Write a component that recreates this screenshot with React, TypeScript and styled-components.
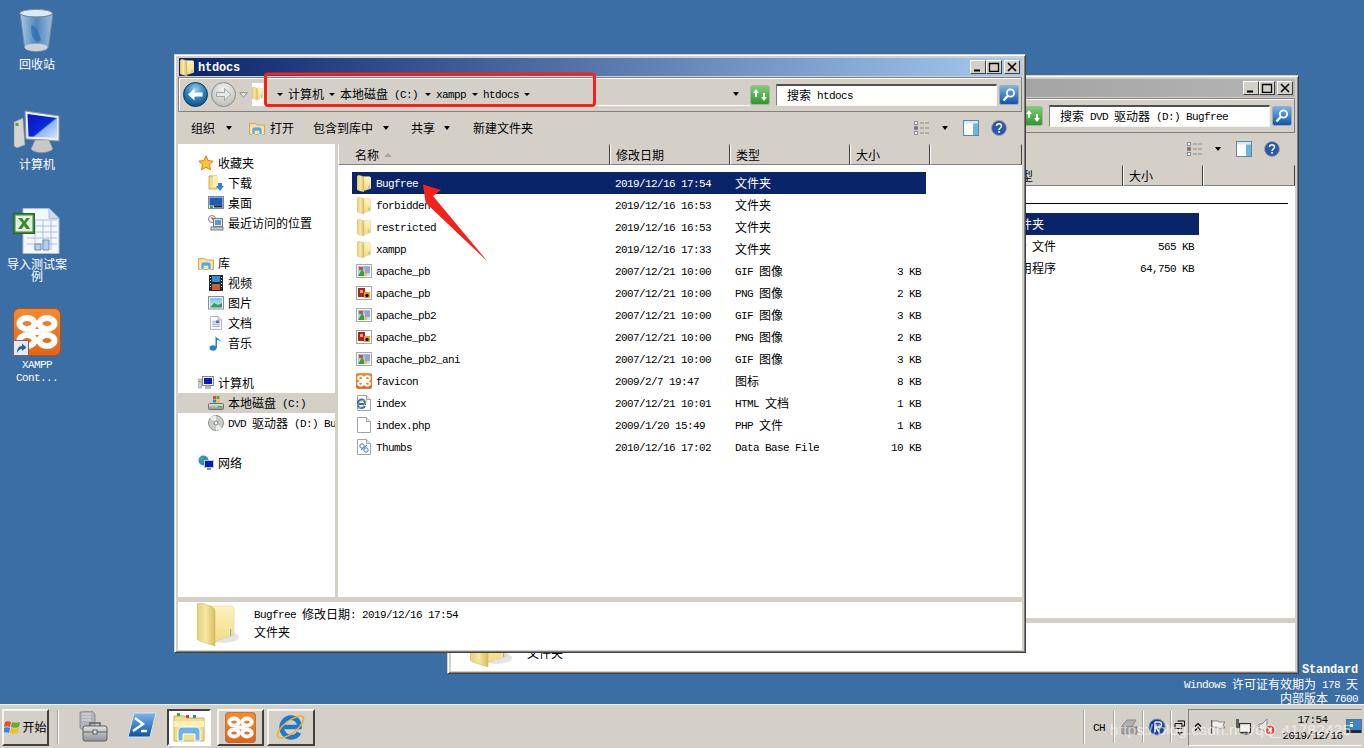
import React from "react";
import styled, { createGlobalStyle } from "styled-components";

const Global = createGlobalStyle`
  html, body { margin: 0; padding: 0; background: #3a6ea5; overflow: hidden; }
  #root { width: 1364px; height: 748px; }
  * { box-sizing: border-box; }
`;

const CJK = /[\u2e80-\u9fff\uff00-\uffef]/;
const CJK_SPLIT = /([\u2e80-\u9fff\uff00-\uffef]+)/;
const Han = styled.span`font: 12px/1 "Noto Sans CJK SC", sans-serif; white-space: pre;`;
const Lat = styled.span`font: 11px/1 "Liberation Mono", monospace; letter-spacing: -.6px; white-space: pre; vertical-align: 1px;`;
const Txt = ({ children }: { children: string }) => (
  <>
    {children.split(CJK_SPLIT).filter(Boolean).map((p, i) =>
      CJK.test(p) ? <Han key={i}>{p}</Han> : <Lat key={i}>{p}</Lat>
    )}
  </>
);

const S = styled.svg`display: block; flex: none;`;
const HiddenDefs = styled.svg`position: absolute; width: 0; height: 0;`;

const Defs = () => (
  <HiddenDefs>
    <defs>
      <linearGradient id="fld" x1="0" y1="0" x2="1" y2="0"><stop offset="0" stopColor="#e6cf7a" /><stop offset=".5" stopColor="#f6e7a2" /><stop offset="1" stopColor="#d9bd60" /></linearGradient>
      <linearGradient id="fldb" x1="0" y1="0" x2="0" y2="1"><stop offset="0" stopColor="#fdf3bd" /><stop offset="1" stopColor="#f2dc86" /></linearGradient>
      <radialGradient id="ball" cx=".5" cy=".3" r=".8"><stop offset="0" stopColor="#9ed0ee" /><stop offset=".5" stopColor="#2a7fb8" /><stop offset="1" stopColor="#0a3f6e" /></radialGradient>
      <radialGradient id="ballg" cx=".5" cy=".3" r=".8"><stop offset="0" stopColor="#f2f2f0" /><stop offset="1" stopColor="#b6b6b2" /></radialGradient>
      <linearGradient id="xam" x1="0" y1="0" x2="0" y2="1"><stop offset="0" stopColor="#f58a30" /><stop offset="1" stopColor="#e2641a" /></linearGradient>
      <linearGradient id="blu" x1="0" y1="0" x2="0" y2="1"><stop offset="0" stopColor="#7fb4e8" /><stop offset="1" stopColor="#0a52a8" /></linearGradient>
      <linearGradient id="grn" x1="0" y1="0" x2="0" y2="1"><stop offset="0" stopColor="#7fd07a" /><stop offset="1" stopColor="#2c962e" /></linearGradient>
      <linearGradient id="scr" x1="0" y1="0" x2="1" y2="1"><stop offset="0" stopColor="#0a14c0" /><stop offset=".55" stopColor="#0a2ad8" /><stop offset=".6" stopColor="#8fb4f0" /><stop offset="1" stopColor="#d5e4f8" /></linearGradient>
      <linearGradient id="sil" x1="0" y1="0" x2="0" y2="1"><stop offset="0" stopColor="#e4e4e4" /><stop offset="1" stopColor="#8e9296" /></linearGradient>
      <linearGradient id="bin" x1="0" y1="0" x2="1" y2="0"><stop offset="0" stopColor="#a8c8e4" /><stop offset=".5" stopColor="#4f86bc" /><stop offset="1" stopColor="#9cbedc" /></linearGradient>
      <linearGradient id="sky" x1="0" y1="0" x2="0" y2="1"><stop offset="0" stopColor="#7fc4e8" /><stop offset="1" stopColor="#c8e8f4" /></linearGradient>
    </defs>
  </HiddenDefs>
);

const Folder = ({ w = 14, h = 17 }: { w?: number; h?: number }) => (
  <S width={w} height={h} viewBox="0 0 14 17">
    <path d="M6 1.5h6.5l1.5 1v11l-8 2.5z" fill="url(#fldb)" stroke="#d8c070" strokeWidth=".3" />
    <path d="M0 1.5 1.5 0l4 1.2C6.5 1.6 7 2.5 7 4v13l-5.5-1.5L0 14.8z" fill="url(#fld)" stroke="#c4a850" strokeWidth=".3" />
    <rect x="11.6" y="10.5" width=".9" height="3" fill="#6fb0e4" />
  </S>
);
const BigFolder = () => (
  <S width={44} height={44} viewBox="0 0 44 44">
    <ellipse cx="26" cy="34" rx="16" ry="6" fill="#000" opacity=".1" />
    <path d="M13 3h22l2 2v27l-24 8z" fill="url(#fldb)" stroke="#dcc87c" strokeWidth=".5" />
    <path d="M0 1 4 0l9 3c3 1 5 3 5 6v34L3 38 0 36z" fill="url(#fld)" stroke="#c8ae58" strokeWidth=".5" />
    <rect x="33" y="26" width="1.2" height="7" fill="#7ab8ec" />
  </S>
);
const GifThumb = () => (
  <S width={16} height={14} viewBox="0 0 16 14">
    <rect x=".5" y=".5" width="15" height="13" fill="#fff" stroke="#a8a8a8" />
    <rect x="2" y="2" width="12" height="10" fill="url(#sky)" />
    <rect x="9" y="3" width="5" height="6" fill="#a49ad8" />
    <path d="M2 12 6 5l4 7z" fill="#3c9c3c" />
    <rect x="3" y="3" width="4" height="3" fill="#e04a30" />
    <rect x="8" y="9" width="3" height="3" fill="#e8c840" />
  </S>
);
const PngThumb = () => (
  <S width={16} height={14} viewBox="0 0 16 14">
    <rect x=".5" y=".5" width="15" height="13" fill="#fff" stroke="#a8a8a8" />
    <rect x="2" y="2" width="7" height="9" fill="#a82818" />
    <rect x="4" y="4" width="3" height="3" fill="#e8a090" />
    <rect x="8" y="6" width="6" height="6" fill="#e8a020" />
    <circle cx="11" cy="9.5" r="1.7" fill="#101010" />
  </S>
);
const XamppLogo = ({ size }: { size: number }) => (
  <S width={size} height={size} viewBox="0 0 48 48">
    <rect x=".5" y=".5" width="47" height="47" rx="6" fill="url(#xam)" stroke="#b8500f" />
    <g fill="none" stroke="#fff" strokeWidth="6">
      <ellipse cx="14" cy="15.500" rx="7.500" ry="5.500" />
      <ellipse cx="14" cy="32.500" rx="7.500" ry="5.500" />
      <ellipse cx="34" cy="15.500" rx="7.500" ry="5.500" />
      <ellipse cx="34" cy="32.500" rx="7.500" ry="5.500" />
      <path d="M16 24h16" />
    </g>
  </S>
);
const Page = ({ children, w = 14, h = 16 }: { children?: React.ReactNode; w?: number; h?: number }) => (
  <S width={w} height={h} viewBox="0 0 14 16">
    <path d="M.5.5h9l4 4v11H.5z" fill="#fff" stroke="#a0a4a8" />
    <path d="M9.5.5v4h4" fill="#e8ecf0" stroke="#a0a4a8" />
    {children}
  </S>
);
const IeMark = ({ size }: { size: number }) => (
  <S width={size} height={size} viewBox="0 0 32 32">
    <path d="M8 16h17c.2-6-4-10-9-10S6 10.500 6 16.500 11 27 16 27c4 0 7-2 8.500-5" fill="none" stroke="#1c78d0" strokeWidth="5" />
    <ellipse cx="15.500" cy="16" rx="17" ry="6.500" transform="rotate(-38 15.500 16)" fill="none" stroke="#eeb020" strokeWidth="1.600" />
  </S>
);
const IndexIcon = () => (
  <Page><g transform="translate(-1 2)"><path d="M2 7h7c0-3-1.500-4.500-3.500-4.500S1.500 4.500 1.500 7 3.500 11 5.500 11c1.500 0 2.800-.6 3.300-2" fill="none" stroke="#2070d0" strokeWidth="2" /><ellipse cx="5.500" cy="7" rx="6" ry="2.400" transform="rotate(-38 5.500 7)" fill="none" stroke="#f0b020" strokeWidth=".8" /></g></Page>
);
const ThumbIcon = () => (
  <Page><g fill="none" stroke="#4a78b0" strokeWidth="1"><circle cx="5" cy="7" r="2.200" /><circle cx="9" cy="11" r="2.200" /><path d="M4 11l6-5" /></g></Page>
);

const Star = () => <S width={16} height={16} viewBox="0 0 16 16"><path d="M8 .8l2.200 4.800 5 .6-3.700 3.400 1 5.200L8 12.300 3.500 14.800l1-5.200L.8 6.200l5-.6z" fill="#f8c830" stroke="#e87818" /></S>;
const DownIcon = () => <S width={16} height={16} viewBox="0 0 16 16"><path d="M1 1h8v13H1z" fill="#f2dc86" stroke="#c8ae58" /><path d="M5 1h5v11H5z" fill="#fbeeb0" /><path d="M10 8h4v3h2l-4 5-4-5h2z" fill="#2c86d8" /></S>;
const DeskIcon = () => <S width={16} height={14} viewBox="0 0 16 14"><rect x=".5" y=".5" width="15" height="12" fill="#e8e8e8" stroke="#7a8ca0" /><rect x="1.500" y="1.500" width="13" height="8" fill="#1c5cb8" /><rect x="6" y="9.500" width="8.500" height="2" fill="#222" /><rect x="2" y="10" width="3" height="2" fill="#38a038" /></S>;
const RecentIcon = () => <S width={16} height={16} viewBox="0 0 16 16"><circle cx="4" cy="4" r="3.500" fill="#f0f0f0" stroke="#808080" /><path d="M4 2v2h2" stroke="#606060" fill="none" /><rect x="5.500" y="3.500" width="9" height="8" fill="#e8e8e8" stroke="#707880" /><rect x="7" y="5" width="6" height="5" fill="#5a98c8" /><rect x="3" y="12" width="12" height="3" fill="#c8c8c8" stroke="#808080" /></S>;
const LibIcon = ({ w = 16, h = 14 }: { w?: number; h?: number }) => <S width={w} height={h} viewBox="0 0 16 14"><path d="M.5 2.500h6l1 1.500h8v9.500H.5z" fill="#f6e296" stroke="#c8ae58" /><path d="M3 13.500V8a3 3 0 0 1 3-2h4a3 3 0 0 1 3 2v5.500h-3V10H6v3.500z" fill="#5ea8dc" stroke="#fff" strokeWidth=".5" /></S>;
const VideoIcon = () => <S width={14} height={16} viewBox="0 0 14 16"><rect width="14" height="16" fill="#1c2a38" /><rect x="3" y="1" width="8" height="6" fill="#3a8ed8" /><rect x="3" y="9" width="8" height="6" fill="#c86038" /><path d="M1 2h1v1H1zM1 5h1v1H1zM1 8h1v1H1zM1 11h1v1H1zM12 2h1v1h-1zM12 5h1v1h-1zM12 8h1v1h-1zM12 11h1v1h-1z" fill="#fff" /></S>;
const PicIcon = () => <S width={16} height={14} viewBox="0 0 16 14"><rect x=".5" y=".5" width="15" height="12.500" fill="#f4f4f4" stroke="#8090a0" /><rect x="2" y="2" width="12" height="9.500" fill="url(#sky)" /><path d="M2 11.500 6 7l4 2 4-2v4.500z" fill="#3c9468" /></S>;
const DocIcon = () => <Page w={12} h={16}><path d="M2.500 6h6M2.500 8h9M2.500 10h9M2.500 12h9" stroke="#8ca0c0" /><rect x="7" y="5" width="4" height="3" fill="#4a78c0" /></Page>;
const MusicIcon = () => <S width={14} height={16} viewBox="0 0 14 16"><ellipse cx="4" cy="13" rx="3.500" ry="2.800" fill="#2a80d0" /><path d="M6.500 13V1c1 2.500 5 3 6 6-1.500-1.500-3.500-2-4.500-2v8z" fill="#2a80d0" /></S>;
const CompSmall = () => <S width={16} height={14} viewBox="0 0 16 14"><rect x="0" y="3" width="3.500" height="9" fill="#d0d0c8" stroke="#808080" strokeWidth=".5" /><rect x="1" y="5" width="1.500" height="1" fill="#30a030" /><rect x="4.500" y=".5" width="11" height="9" fill="#f0f0f0" stroke="#808890" /><rect x="6" y="2" width="8" height="6" fill="#0a1cb8" /><rect x="7" y="10" width="6" height="3" fill="#b8b8b8" /></S>;
const DiskIcon = () => <S width={16} height={16} viewBox="0 0 16 16"><rect x=".5" y="8.500" width="15" height="6" rx="1" fill="url(#sil)" stroke="#707070" /><rect x="10" y="11" width="4" height="1.500" fill="#40c040" /><rect x="5" y="1" width="3" height="3" fill="#e84a20" /><rect x="8.500" y="1" width="3" height="3" fill="#50b030" /><rect x="5" y="4.500" width="3" height="3" fill="#2880e0" /><rect x="8.500" y="4.500" width="3" height="3" fill="#f0c020" /></S>;
const DvdIcon = () => <S width={16} height={16} viewBox="0 0 16 16"><circle cx="8" cy="8" r="7.500" fill="#c8ccc8" stroke="#909090" /><path d="M8 8 2 3a8 8 0 0 1 6-2.500zM8 8l6 5a8 8 0 0 1-6 2.500z" fill="#eef2e8" /><circle cx="8" cy="8" r="2" fill="#fff" stroke="#808080" /></S>;
const NetIcon = () => <S width={16} height={16} viewBox="0 0 16 16"><circle cx="5.500" cy="5.500" r="5" fill="#2a90d8" /><path d="M2 3c2-2 4 0 3 2S2 6 2 3zM6 8c1-1 3 0 2 2z" fill="#50b040" /><rect x="6.500" y="5.500" width="9" height="7" fill="#0a1cb8" stroke="#c0c8d0" /><rect x="9" y="13" width="4" height="2" fill="#8090a0" /></S>;

const Ball = ({ on, flip }: { on: boolean; flip?: boolean }) => (
  <S width={25} height={25} viewBox="0 0 25 25">
    <circle cx="12.500" cy="12.500" r="12" fill={on ? "url(#ball)" : "url(#ballg)"} stroke={on ? "#0a3a60" : "#8c8c8c"} />
    <g transform={flip ? "rotate(180 12.500 12.500)" : undefined}>
      <path d="M5 12.500 11.500 6.500v4h8v4h-8v4z" fill={on ? "#fff" : "#e6e6e2"} stroke={on ? "none" : "#a4a4a0"} />
    </g>
  </S>
);
const Chevron = () => <S width={9} height={6} viewBox="0 0 9 6"><path d="M.7.7h7.600L4.500 5.300z" fill="#eee" stroke="#8a8a8a" /></S>;
const Refresh = () => (
  <S width={20} height={20} viewBox="0 0 20 20">
    <rect x=".5" y=".5" width="19" height="19" rx="2" fill="url(#grn)" stroke="#b0b0a8" />
    <path d="M3 8l3-4 3 4H7v4H5V8zM17 12l-3 4-3-4h2V8h2v4z" fill="#fff" />
  </S>
);
const SearchGlyph = () => (
  <S width={20} height={20} viewBox="0 0 20 20">
    <rect x=".5" y=".5" width="19" height="19" rx="2" fill="url(#blu)" stroke="#a0a8b0" />
    <circle cx="11.500" cy="8" r="3.600" fill="none" stroke="#fff" strokeWidth="1.800" />
    <path d="M8.500 11 4.500 15.500" stroke="#fff" strokeWidth="2.400" />
  </S>
);
const ViewsIcon = () => (
  <S width={16} height={14} viewBox="0 0 16 14">
    <rect x=".5" y=".5" width="3" height="3" fill="#fff" stroke="#7a8ca0" /><rect x=".5" y="5.500" width="3" height="3" fill="#e04030" stroke="#7a8ca0" /><rect x=".5" y="10.500" width="3" height="3" fill="#fff" stroke="#7a8ca0" />
    <path d="M6 2h9M6 7h9M6 12h9" stroke="#8a8a8a" strokeDasharray="4 1" />
  </S>
);
const PaneIcon = () => (
  <S width={16} height={16} viewBox="0 0 16 16">
    <rect x=".5" y=".5" width="15" height="15" fill="#fff" stroke="#5a88a8" /><rect x="1" y="1" width="14" height="2.500" fill="#d8e8f0" /><rect x="10" y="3.500" width="5" height="11.500" fill="#6cb4d8" />
  </S>
);
const HelpIcon = () => (
  <S width={16} height={16} viewBox="0 0 16 16">
    <circle cx="8" cy="8" r="7.500" fill="#2858b0" stroke="#a0a0a0" strokeWidth="1" />
    <path d="M5.500 6c0-3 5-3 5 0 0 2-2.500 2-2.500 4" fill="none" stroke="#fff" strokeWidth="1.500" />
    <rect x="7.200" y="11" width="1.700" height="1.700" fill="#fff" />
  </S>
);
const CaptionGlyph = ({ kind }: { kind: string }) => (
  <S width={12} height={10} viewBox="0 0 12 10">
    {kind === "min" && <rect x="2" y="7.500" width="6" height="2" fill="#000" />}
    {kind === "max" && <path d="M1.500 1.500h9v8h-9z M1 1.500h10" fill="none" stroke="#000" strokeWidth="1.300" />}
    {kind === "close" && <path d="M2 1l8 8M10 1 2 9" stroke="#000" strokeWidth="1.600" />}
  </S>
);

/* desktop icons */
const BinIcon = () => (
  <S width={40} height={46} viewBox="0 0 40 48">
    <ellipse cx="19" cy="5.500" rx="17" ry="4" fill="#dfe9f2" stroke="#7b8c9c" />
    <path d="M2.500 6.500 7 41c1 6 23 6 25 0l4.500-34.500C30 10.500 9 10.500 2.500 6.500z" fill="url(#bin)" stroke="#6f8aa4" />
    <path d="M14 18c3-1 6 4 8 9s3 7 0 8c-5 0-9-6-8-17z" fill="#1f5ea8" opacity=".55" />
    <ellipse cx="19" cy="41" rx="12" ry="4" fill="#ccd2d6" />
  </S>
);
const PcIcon = () => (
  <S width={48} height={48} viewBox="0 -2 48 48">
    <path d="M1 12l9-4 2 27-8 3-3-2z" fill="#d4d4d0" stroke="#8a8a8a" strokeWidth=".6" />
    <rect x="2.500" y="13" width="3" height="3" fill="#50a050" />
    <path d="M12 1l34 5v25L13 29z" fill="#eceff2" stroke="#8a96a4" />
    <path d="M14.500 4 44 8v20L15.500 26.500z" fill="url(#scr)" />
    <path d="M22 30h14l4 9c-5 5-18 5-22 0z" fill="#c8c8c8" stroke="#8a8a8a" strokeWidth=".6" />
  </S>
);
const ExcelIcon = () => (
  <S width={48} height={46} viewBox="0 0 48 46">
    <path d="M10 .5h26l10 10v35H10z" fill="#f4f8fc" stroke="#a8bcd8" />
    <path d="M36 .5v10h10" fill="#cfdcf0" stroke="#a8bcd8" />
    <path d="M14 12h30M14 18h30M14 24h30M14 30h30M14 36h30M22 12v30M30 12v30M38 12v30" stroke="#a8c0e4" fill="none" />
    <path d="M22 42v-6h6v6zM30 42V32h6v10z" fill="#b8cce8" stroke="#6c8cbc" />
    <rect x=".5" y="5.500" width="21" height="20" fill="#3d8a3a" stroke="#2a6428" />
    <rect x="2.500" y="7.500" width="17" height="16" fill="#e4f0dc" />
    <path d="M5 10h4l2.200 3L13.500 10H17l-4 5 4.300 6h-4l-2.300-3.300L8.700 21H5l4.300-6z" fill="#3a8a38" />
  </S>
);
const XampWrap = styled.span`position: relative; display: block; width: 48px; height: 48px;`;
const Shortcut = styled.span`
  position: absolute; left: 0; bottom: 0; width: 16px; height: 16px;
  background: #e8e8e8; border: 1px solid #6a6a6a; display: flex; align-items: center; justify-content: center;
`;
const XamppDesk = () => (
  <XampWrap>
    <XamppLogo size={48} />
    <Shortcut><S width={12} height={12} viewBox="0 0 12 12"><path d="M2 11C2 6 4 4 7 4V1.500L11.500 5.500 7 9V7C5 7 3.500 8 2 11z" fill="#2860b0" /></S></Shortcut>
  </XampWrap>
);

/* layout */
const Shell = styled.div`
  width: 1364px; height: 748px; position: relative; display: flex; flex-direction: column;
  background: #3a6ea5; color: #000; font: 12px "Noto Sans CJK SC", sans-serif;
`;
const Desktop = styled.div`flex: 1; position: relative; overflow: hidden;`;
const IconColumn = styled.div`position: absolute; left: 0; top: 8px; width: 74px; display: flex; flex-direction: column;`;
const DeskItem = styled.div`height: 100px; display: flex; flex-direction: column; align-items: center; color: #fff;`;
const DeskGlyph = styled.div`height: 50px; display: flex; align-items: flex-start; justify-content: center;`;
const DeskLabel = styled.div`line-height: 12px; text-align: center; width: 64px;`;

const Win = styled.div<{ $x: number; $y: number }>`
  position: absolute; left: ${p => p.$x}px; top: ${p => p.$y}px; width: 852px; height: 599px;
  background: #d4d0c8; border: 1px solid; border-color: #d4d0c8 #404040 #404040 #d4d0c8;
  box-shadow: inset 1px 1px 0 #fff, inset -1px -1px 0 #808080;
  padding: 3px 3px 2px 3px; display: flex; flex-direction: column;
`;
const TitleBar = styled.div<{ $active: boolean }>`
  height: 18px; margin: 0 0 1px 1px; padding: 0 2px 0 1px; display: flex; align-items: center; color: #fff;
  background: ${p => p.$active ? "linear-gradient(90deg, #0a246a, #a6caf0)" : "linear-gradient(90deg, #808080, #b5b5b5)"};
`;
const TitleText = styled.div`margin-left: 4px; padding-top: 1px; font: bold 12px "Liberation Mono", monospace; letter-spacing: -.2px; flex: 1;`;
const CapBtn = styled.button<{ $ml?: number }>`
  width: 16px; height: 14px; padding: 0; margin-left: ${p => p.$ml ?? 0}px; background: #d4d0c8;
  border: 1px solid; border-color: #fff #404040 #404040 #fff; display: flex; align-items: center; justify-content: center;
`;
const AddrBar = styled.div`
  height: 35px; margin-bottom: 1px; padding: 0 2px 0 4px; display: flex; align-items: center;
  border: 1px solid #808080; box-shadow: inset 1px 1px 0 #fff;
`;
const Arrows = styled.div`display: flex; align-items: center; gap: 3px; width: 69px; flex: none;`;
const AddrField = styled.div`flex: 1; height: 22px; display: flex; align-items: center; border-bottom: 1px solid #fff; padding-right: 11px;`;
const FolderBox = styled.div`width: 13px; height: 22px; background: #fff; overflow: hidden; flex: none; margin-right: 12px; padding-top: 2px;`;
const Crumb = styled.div<{ $after?: number }>`line-height: 16px; margin: 0 ${p => p.$after ?? 6}px 0 5px; white-space: nowrap;`;
const Caret = styled.i<{ $ml?: number }>`
  flex: none; width: 0; height: 0; margin-left: ${p => p.$ml ?? 0}px;
  border-left: 3.5px solid transparent; border-right: 3.5px solid transparent; border-top: 4px solid #000;
`;
const SmallCaret = styled.i`
  flex: none; width: 0; height: 0; border-left: 3px solid transparent; border-right: 3px solid transparent; border-top: 3px solid #000;
`;
const Spacer = styled.div`flex: 1;`;
const RefreshSlot = styled.div`margin: 0 6px 0 0; flex: none;`;
const SearchBox = styled.div`
  width: 221px; height: 22px; margin-right: 2px; padding-left: 10px; line-height: 18px; background: #fff; flex: none;
  border-style: solid; border-width: 2px 1px 1px 1px; border-color: #505050 #f4f4f0 #f4f4f0 #808080; white-space: nowrap; overflow: hidden;
`;
const CmdBar = styled.div`height: 30px; margin-bottom: 1px; padding: 0 15px 0 13px; display: flex; align-items: center; line-height: 16px;`;
const CmdText = styled.div<{ $ml?: number }>`margin-left: ${p => p.$ml ?? 0}px; white-space: nowrap;`;
const CmdGlyph = styled.div<{ $ml?: number }>`margin-left: ${p => p.$ml ?? 0}px; flex: none;`;
const Body = styled.div`flex: 1; min-height: 0; display: flex; gap: 3px; margin-bottom: 5px;`;
const Nav = styled.nav`width: 157px; flex: none; background: #fff; padding-top: 9px; overflow: hidden; display: flex; flex-direction: column; gap: 20px;`;
const NavGroup = styled.div`display: flex; flex-direction: column;`;
const NavRow = styled.div<{ $sub?: boolean; $on?: boolean }>`
  height: 20px; display: flex; align-items: center; gap: 4px; white-space: nowrap; overflow: hidden; line-height: 16px;
  padding-left: ${p => p.$sub ? 30 : 20}px; background: ${p => p.$on ? "#d4d0c8" : "transparent"};
`;
const NavLabel = styled.div`white-space: nowrap;`;
const NavGlyph = styled.div`width: 16px; flex: none; display: flex; justify-content: center;`;
const Pane = styled.div`flex: 1; min-width: 0; background: #fff; display: flex; flex-direction: column;`;
const Head = styled.div`height: 21px; flex: none; display: flex; background: #d4d0c8;`;
const HeadCell = styled.div<{ $w?: number; $pl?: number }>`
  ${p => p.$w ? `width: ${p.$w}px; flex: none;` : "flex: 1;"}
  padding-left: ${p => p.$pl ?? 5}px; display: flex; align-items: center; gap: 5px; line-height: 18px;
  border: 1px solid; border-color: #d4d0c8 #404040 #808080 #fff;
`;
const SortUp = styled.i`width: 0; height: 0; border-left: 4px solid transparent; border-right: 4px solid transparent; border-bottom: 4px solid #a8a49c;`;
const ListBody = styled.div<{ $pt: number }>`flex: 1; overflow: hidden; padding: ${p => p.$pt}px 7px 0 14px;`;
const Rule = styled.div`height: 1px; background: #000; margin-bottom: 9px;`;
const Row = styled.div<{ $sel?: boolean }>`
  width: 574px; height: 22px; padding-right: 5px; display: grid; grid-template-columns: 263px 120px 120px 66px; align-items: center;
  line-height: 16px; white-space: nowrap;
  background: ${p => p.$sel ? "#0a246a" : "transparent"}; color: ${p => p.$sel ? "#fff" : "#000"};
`;
const NameCell = styled.div`display: flex; align-items: center; gap: 4px; padding-left: 4px; overflow: hidden;`;
const RowGlyph = styled.div`width: 16px; flex: none; display: flex; justify-content: center;`;
const SizeCell = styled.div`text-align: right;`;
const Cell = styled.div``;
const Details = styled.div`height: 48px; flex: none; background: #fff; display: flex; padding: 1px 0 0 19px; overflow: hidden;`;
const DetailText = styled.div`margin: 2px 0 0 13px; line-height: 18px;`;

const Brand = styled.div`position: absolute; right: 6px; top: 663px; text-align: right; color: #fff; line-height: 13.500px;`;
const BrandBold = styled.div`font: bold 12px "Liberation Mono", monospace; letter-spacing: -.2px; line-height: 14px;`;

const Taskbar = styled.div`
  height: 44px; flex: none; background: #d4d0c8; border-top: 1px solid #f0eee8; padding: 3px 0 2px 2px; display: flex; align-items: center; position: relative;
`;
const Raised = styled.button<{ $w: number; $ml?: number; $down?: boolean }>`
  width: ${p => p.$w}px; height: 37px; flex: none; margin-left: ${p => p.$ml ?? 0}px; padding: 0; display: flex; align-items: center; justify-content: center; gap: 1px;
  background: ${p => p.$down ? "#fff" : "#d4d0c8"}; color: #000; font: inherit; line-height: 16px; border: 2px solid;
  border-color: ${p => p.$down ? "#404040 #fff #fff #404040" : "#f4f4f0 #404040 #404040 #f4f4f0"};
`;
const BarSep = styled.div<{ $ml?: number; $h?: number }>`
  width: 2px; height: ${p => p.$h ?? 34}px; flex: none; margin-left: ${p => p.$ml ?? 0}px; background: #fff; border-left: 1px solid #a0a0a0;
`;
const QuickSlots = styled.div`display: flex; margin-left: 9px;`;
const QuickSlot = styled.div`width: 49px; flex: none; display: flex; justify-content: center;`;
const TrayCell = styled.div<{ $w: number }>`
  width: ${p => p.$w}px; flex: none; display: flex; flex-direction: column; align-items: center; justify-content: center; gap: 2px; line-height: 14px;
`;
const TrayBox = styled.div`
  width: 174px; height: 37px; flex: none; margin-right: 2px; display: flex; align-items: center; padding-left: 1px;
  border: 1px solid; border-color: #808080 #d4d0c8 #fff #808080;
`;
const ClockCell = styled.div`width: 67px; flex: none; display: flex; flex-direction: column; align-items: center; line-height: 16px;`;
const ClockLine = styled.div`line-height: 16px;`;
const Watermark = styled.div`
  position: absolute; left: 1110px; top: 16px; font: 15.500px "Liberation Sans", sans-serif; letter-spacing: .1px; color: rgba(255,255,255,.6); white-space: nowrap; pointer-events: none;
`;
const Annot = styled.svg`position: absolute; left: 0; top: 0; pointer-events: none;`;

const rowsMain = [
  { n: "Bugfree", d: "2019/12/16 17:54", t: "文件夹", s: "", i: "f", sel: true },
  { n: "forbidden", d: "2019/12/16 16:53", t: "文件夹", s: "", i: "f" },
  { n: "restricted", d: "2019/12/16 16:53", t: "文件夹", s: "", i: "f" },
  { n: "xampp", d: "2019/12/16 17:33", t: "文件夹", s: "", i: "f" },
  { n: "apache_pb", d: "2007/12/21 10:00", t: "GIF 图像", s: "3 KB", i: "g" },
  { n: "apache_pb", d: "2007/12/21 10:00", t: "PNG 图像", s: "2 KB", i: "p" },
  { n: "apache_pb2", d: "2007/12/21 10:00", t: "GIF 图像", s: "3 KB", i: "g" },
  { n: "apache_pb2", d: "2007/12/21 10:00", t: "PNG 图像", s: "2 KB", i: "p" },
  { n: "apache_pb2_ani", d: "2007/12/21 10:00", t: "GIF 图像", s: "3 KB", i: "g" },
  { n: "favicon", d: "2009/2/7 19:47", t: "图标", s: "8 KB", i: "x" },
  { n: "index", d: "2007/12/21 10:01", t: "HTML 文档", s: "1 KB", i: "e" },
  { n: "index.php", d: "2009/1/20 15:49", t: "PHP 文件", s: "1 KB", i: "b" },
  { n: "Thumbs", d: "2010/12/16 17:02", t: "Data Base File", s: "10 KB", i: "t" },
];
const rowsBack = [
  { n: "", d: "", t: "文件夹", s: "", i: "", sel: true },
  { n: "", d: "", t: "ZIP 文件", s: "565 KB", i: "" },
  { n: "", d: "", t: "应用程序", s: "64,750 KB", i: "" },
];
const RowIcon = ({ k }: { k: string }) => {
  if (k === "f") return <Folder />;
  if (k === "g") return <GifThumb />;
  if (k === "p") return <PngThumb />;
  if (k === "x") return <XamppLogo size={16} />;
  if (k === "e") return <IndexIcon />;
  if (k === "b") return <Page />;
  if (k === "t") return <ThumbIcon />;
  return null;
};

const NavItem = ({ icon, label, sub, on }: { icon: React.ReactNode; label: string; sub?: boolean; on?: boolean }) => (
  <NavRow $sub={sub} $on={on}><NavGlyph>{icon}</NavGlyph><NavLabel><Txt>{label}</Txt></NavLabel></NavRow>
);
const NavData = () => (
  <>
    <NavGroup>
      <NavItem icon={<Star />} label="收藏夹" />
      <NavItem sub icon={<DownIcon />} label="下载" />
      <NavItem sub icon={<DeskIcon />} label="桌面" />
      <NavItem sub icon={<RecentIcon />} label="最近访问的位置" />
    </NavGroup>
    <NavGroup>
      <NavItem icon={<LibIcon />} label="库" />
      <NavItem sub icon={<VideoIcon />} label="视频" />
      <NavItem sub icon={<PicIcon />} label="图片" />
      <NavItem sub icon={<DocIcon />} label="文档" />
      <NavItem sub icon={<MusicIcon />} label="音乐" />
    </NavGroup>
    <NavGroup>
      <NavItem icon={<CompSmall />} label="计算机" />
      <NavItem sub on icon={<DiskIcon />} label="本地磁盘 (C:)" />
      <NavItem sub icon={<DvdIcon />} label="DVD 驱动器 (D:) Bu" />
    </NavGroup>
    <NavGroup>
      <NavItem icon={<NetIcon />} label="网络" />
    </NavGroup>
  </>
);

type WinProps = {
  x: number; y: number; active: boolean; title: string; search: string;
  crumbs: { label: string; after?: number }[]; rows: typeof rowsMain; rule?: boolean;
  detailTop: string; nav?: boolean;
};
const ExplorerWindow = ({ x, y, active, title, search, crumbs, rows, rule, detailTop, nav }: WinProps) => (
  <Win $x={x} $y={y}>
    <TitleBar $active={active}>
      <Folder />
      <TitleText>{title}</TitleText>
      <CapBtn><CaptionGlyph kind="min" /></CapBtn>
      <CapBtn><CaptionGlyph kind="max" /></CapBtn>
      <CapBtn $ml={2}><CaptionGlyph kind="close" /></CapBtn>
    </TitleBar>
    <AddrBar>
      <Arrows>
        <Ball on />
        <Ball on={false} flip />
        <Chevron />
      </Arrows>
      <AddrField>
        <FolderBox><Folder w={11} h={17} /></FolderBox>
        {crumbs.map((c, i) => (
          <React.Fragment key={i}>
            <SmallCaret />
            <Crumb $after={c.after}><Txt>{c.label}</Txt></Crumb>
          </React.Fragment>
        ))}
        {crumbs.length > 0 && <SmallCaret />}
        <Spacer />
        <Caret />
      </AddrField>
      <RefreshSlot><Refresh /></RefreshSlot>
      <SearchBox><Txt>{search}</Txt></SearchBox>
      <SearchGlyph />
    </AddrBar>
    <CmdBar>
      <CmdText><Txt>组织</Txt></CmdText>
      <Caret $ml={11} />
      <CmdGlyph $ml={17}><LibIcon /></CmdGlyph>
      <CmdText $ml={5}><Txt>打开</Txt></CmdText>
      <CmdText $ml={19}><Txt>包含到库中</Txt></CmdText>
      <Caret $ml={10} />
      <CmdText $ml={22}><Txt>共享</Txt></CmdText>
      <Caret $ml={9} />
      <CmdText $ml={23}><Txt>新建文件夹</Txt></CmdText>
      <Spacer />
      <ViewsIcon />
      <Caret $ml={12} />
      <CmdGlyph $ml={15}><PaneIcon /></CmdGlyph>
      <CmdGlyph $ml={12}><HelpIcon /></CmdGlyph>
    </CmdBar>
    <Body>
      <Nav>{nav && <NavData />}</Nav>
      <Pane>
        <Head>
          <HeadCell $w={272} $pl={16}><Cell><Txt>名称</Txt></Cell>{!rule && <SortUp />}</HeadCell>
          <HeadCell $w={120}><Cell><Txt>修改日期</Txt></Cell></HeadCell>
          <HeadCell $w={120}><Cell><Txt>类型</Txt></Cell></HeadCell>
          <HeadCell $w={80}><Cell><Txt>大小</Txt></Cell></HeadCell>
          <HeadCell />
        </Head>
        <ListBody $pt={rule ? 17 : 7}>
          {rule && <Rule />}
          {rows.map((r, i) => (
            <Row key={i} $sel={r.sel}>
              <NameCell><RowGlyph><RowIcon k={r.i} /></RowGlyph><Cell><Txt>{r.n}</Txt></Cell></NameCell>
              <Cell><Txt>{r.d}</Txt></Cell>
              <Cell><Txt>{r.t}</Txt></Cell>
              <SizeCell><Txt>{r.s}</Txt></SizeCell>
            </Row>
          ))}
        </ListBody>
      </Pane>
    </Body>
    <Details>
      <BigFolder />
      <DetailText>
        <div><Txt>{detailTop || " "}</Txt></div>
        <div><Txt>文件夹</Txt></div>
      </DetailText>
    </Details>
  </Win>
);

const ToolboxIcon = () => (
  <S width={30} height={32} viewBox="0 0 30 32">
    <path d="M2 1l12-1 3 3v16H5L2 17z" fill="#b0b4b8" stroke="#6c7074" strokeWidth=".6" />
    <path d="M4 3h9M4 6h9M4 9h9" stroke="#e4e4e4" />
    <rect x="5" y="15" width="24" height="15" rx="2" fill="url(#sil)" stroke="#5c6064" />
    <path d="M12 15v-3h10v3" fill="none" stroke="#5c6064" strokeWidth="1.500" />
    <path d="M5 21h24" stroke="#5c6064" />
    <rect x="15" y="19" width="4" height="4" fill="#e4e4e4" stroke="#5c6064" />
  </S>
);
const PsIcon = () => (
  <S width={30} height={28} viewBox="0 0 30 28">
    <path d="M7 2h22l-6 24H1z" fill="url(#blu)" stroke="#d8e4f0" />
    <path d="M8 7l8 6-10 7" fill="none" stroke="#fff" strokeWidth="2.400" />
    <path d="M14 20h6" stroke="#fff" strokeWidth="2.400" />
  </S>
);
const ExplorerIcon = () => (
  <S width={32} height={30} viewBox="0 0 32 30">
    <path d="M1 4h11l2 2h17v23H1z" fill="#f4dc8a" stroke="#c8ae58" />
    <rect x="4" y="1" width="3" height="3" fill="#30b040" />
    <rect x="13" y="3" width="3" height="3" fill="#d04030" />
    <rect x="20" y="3" width="3" height="3" fill="#3080d0" />
    <path d="M1 9h30v6H1z" fill="#fcefb8" />
    <path d="M5 29V19c0-2 2-4 4-4h14c2 0 4 2 4 4v10h-5v-7H10v7z" fill="#6cb4e4" stroke="#fff" />
  </S>
);
const Flag = () => (
  <S width={16} height={14} viewBox="0 0 16 14">
    <path d="M1 0h1v14H1z" fill="#505050" />
    <path d="M2 1h6l1 1h6l-2 3 2 3H8L7 7H2z" fill="#f0f0ec" stroke="#707070" strokeWidth=".8" />
  </S>
);
const NetTray = () => (
  <S width={16} height={16} viewBox="0 0 16 16">
    <rect x="4.500" y="4.500" width="11" height="9" fill="#d4d0c8" stroke="#303030" />
    <rect x="6" y="6" width="8" height="6" fill="#f0f0ec" />
    <rect x="1" y="0" width="3" height="9" fill="#606060" />
    <path d="M5 15h10" stroke="#303030" />
  </S>
);
const Speaker = () => (
  <S width={18} height={18} viewBox="0 0 18 18">
    <path d="M1 6h3l5-5v14L4 11H1z" fill="#e4e4e0" stroke="#8a8a8a" />
    <circle cx="12" cy="12" r="5" fill="#e04038" stroke="#fff" />
    <path d="M10 10l4 4M14 10l-4 4" stroke="#fff" strokeWidth="1.400" />
  </S>
);
const Kbd = () => (
  <S width={20} height={20} viewBox="0 0 20 20">
    <path d="M2 10l6-7h9l-4 7z" fill="#b0b0ac" stroke="#8a8a8a" />
    <rect x="2" y="10" width="16" height="7" fill="#9a9a96" stroke="#7a7a76" />
  </S>
);
const RegIcon = () => (
  <S width={18} height={18} viewBox="0 0 18 18">
    <circle cx="9" cy="9" r="8" fill="#183c98" stroke="#7090c0" />
    <path d="M7 4h4a2.500 2.500 0 0 1 0 5H8l3 5M7 4v10" fill="none" stroke="#e8e8e8" strokeWidth="1.500" />
  </S>
);
const Restore = () => (
  <S width={12} height={10} viewBox="0 0 12 10">
    <path d="M3.500 1h7v5h-2M1 3.500h7v5H1z" fill="none" stroke="#000" />
  </S>
);
const DoubleChevron = () => (
  <S width={8} height={10} viewBox="0 0 8 10">
    <path d="M1 4.500 4 1.500l3 3M1 8.500l3-3 3 3" fill="none" stroke="#000" strokeWidth="1.200" />
  </S>
);
const ShowDesk = () => (
  <S width={16} height={16} viewBox="0 0 16 16">
    <rect x=".5" y=".5" width="15" height="13" fill="#3a86d0" stroke="#607080" />
    <rect x="1" y="11" width="14" height="3" fill="#202830" />
    <path d="M4 3h3v1H4zM4 5h3v3H4z" fill="#fff" />
  </S>
);
const WinFlag = () => (
  <S width={17} height={15} viewBox="0 0 17 15">
    <path d="M1 2c2-1 4-1 6 0l-1 5C4 6 2 6 0 7z" fill="#e85028" />
    <path d="M8 2c2 1 5 1 8 0l-1 5c-2 1-5 1-8 0z" fill="#60b030" />
    <path d="M0 8c2-1 4-1 6 0l-1 5c-2-1-4-1-6 0z" fill="#3088e0" />
    <path d="M7 8c2 1 5 1 8 0l-1 5c-3 1-6 1-8 0z" fill="#f0c020" />
  </S>
);

export default function App() {
  return (
    <Shell>
      <Global />
      <Defs />
      <Desktop>
        <IconColumn>
          <DeskItem><DeskGlyph><BinIcon /></DeskGlyph><DeskLabel><Txt>回收站</Txt></DeskLabel></DeskItem>
          <DeskItem><DeskGlyph><PcIcon /></DeskGlyph><DeskLabel><Txt>计算机</Txt></DeskLabel></DeskItem>
          <DeskItem><DeskGlyph><ExcelIcon /></DeskGlyph><DeskLabel><Txt>导入测试案</Txt><br /><Txt>例</Txt></DeskLabel></DeskItem>
          <DeskItem><DeskGlyph><XamppDesk /></DeskGlyph><DeskLabel><Txt>XAMPP</Txt><br /><Txt>Cont...</Txt></DeskLabel></DeskItem>
        </IconColumn>
        <Brand>
          <BrandBold>Standard</BrandBold>
          <div><Txt>Windows 许可证有效期为 178 天</Txt></div>
          <div><Txt>内部版本 7600</Txt></div>
        </Brand>
        <ExplorerWindow x={447} y={75} active={false} title="Bugfree" search="搜索 DVD 驱动器 (D:) Bugfree" crumbs={[]} rows={rowsBack as typeof rowsMain} rule detailTop="" />
        <ExplorerWindow
          x={174} y={54} active title="htdocs" search="搜索 htdocs" rows={rowsMain} nav
          crumbs={[{ label: "计算机", after: 5 }, { label: "本地磁盘 (C:)", after: 7 }, { label: "xampp", after: 6 }, { label: "htdocs", after: 5 }]}
          detailTop="Bugfree 修改日期: 2019/12/16 17:54"
        />
      </Desktop>
      <Taskbar>
        <Raised $w={47}><WinFlag /><Txt>开始</Txt></Raised>
        <BarSep $ml={8} />
        <QuickSlots>
          <QuickSlot><ToolboxIcon /></QuickSlot>
          <QuickSlot><PsIcon /></QuickSlot>
        </QuickSlots>
        <Raised $w={44} $ml={1} $down><ExplorerIcon /></Raised>
        <Raised $w={47} $ml={6}><XamppLogo size={31} /></Raised>
        <Raised $w={48} $ml={3}><IeMark size={30} /></Raised>
        <Spacer />
        <BarSep />
        <TrayCell $w={28}><div><Txt>CH</Txt></div></TrayCell>
        <BarSep $h={32} />
        <TrayCell $w={27}><Kbd /></TrayCell>
        <BarSep $h={32} />
        <TrayCell $w={26}><RegIcon /></TrayCell>
        <BarSep $h={32} />
        <TrayCell $w={16}><Restore /><SmallCaret /></TrayCell>
        <TrayBox>
          <TrayCell $w={15}><DoubleChevron /></TrayCell>
          <TrayCell $w={25}><Flag /></TrayCell>
          <TrayCell $w={25}><NetTray /></TrayCell>
          <TrayCell $w={24}><Speaker /></TrayCell>
          <ClockCell>
            <ClockLine><Txt>17:54</Txt></ClockLine>
            <ClockLine><Txt>2019/12/16</Txt></ClockLine>
          </ClockCell>
          <ShowDesk />
        </TrayBox>
        <Watermark>https://blog.csdn.net/qq_41782425</Watermark>
      </Taskbar>
      <Annot width="1364" height="748" viewBox="0 0 1364 748">
        <rect x="265.500" y="74" width="329" height="31.500" rx="2.500" fill="none" stroke="#f5211b" strokeWidth="3" />
        <path d="M423 184.500 441 190 433 196 488 262 428 205 425.500 202z" fill="#f5211b" />
      </Annot>
    </Shell>
  );
}
